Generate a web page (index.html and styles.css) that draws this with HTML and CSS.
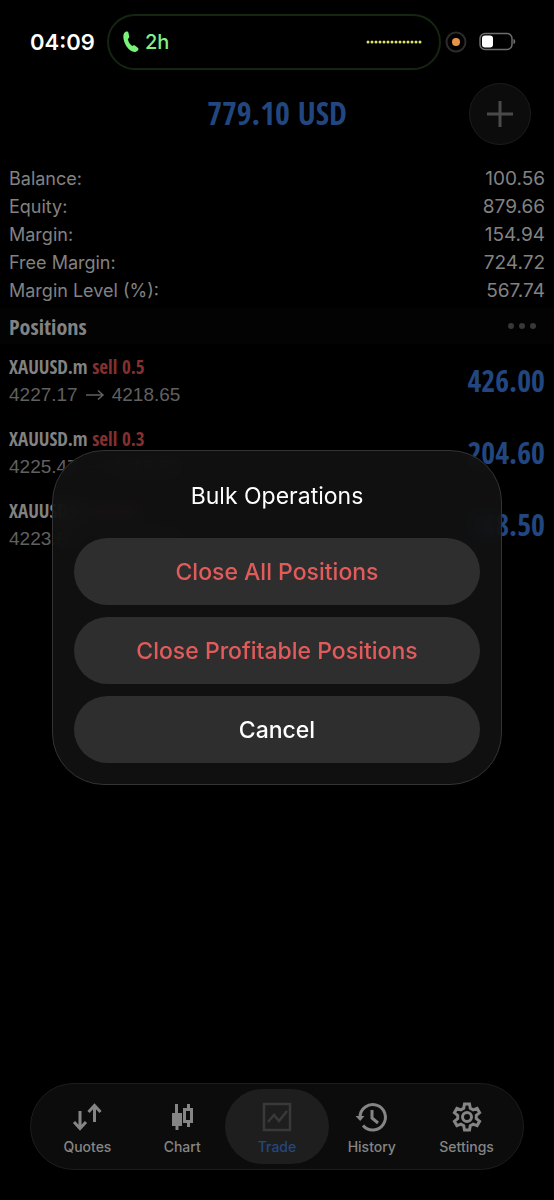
FILE: index.html
```html
<!DOCTYPE html>
<html lang="en">
<head>
<meta charset="utf-8">
<meta name="viewport" content="width=device-width, initial-scale=1">
<title>Trade</title>
<link rel="stylesheet" href="styles.css">
</head>
<body>
<div class="app">
  <div class="status">
    <time class="status-time">04:09</time>
    <div class="island">
      <svg class="phone" viewBox="0 0 18 24" width="18" height="24" aria-hidden="true"><path d="M2 3.400C3.500 1.200 6 1 6.500 3l.7 3.500c.2 1.300-.5 1.700-1.400 2.400.6 3 2 5.200 4.300 7 1-.6 1.800-1 2.800-.3l2.900 2.200c1.500 1.300.2 3.200-1.800 3.900-3.200 1-6.600-1.300-9-4.700C2.300 13.300.2 6.500 2 3.400z"/></svg>
      <span class="call-time">2h</span>
      <svg class="wave" viewBox="0 0 56 4" width="56" height="4" aria-hidden="true"><path d="M2 2H55"/></svg>
    </div>
    <svg class="recording" viewBox="0 0 22 22" width="22" height="22" aria-hidden="true"><circle class="ring" cx="11" cy="11" r="9.500"/><circle class="dot" cx="11" cy="11" r="4"/></svg>
    <svg class="battery" viewBox="0 0 38 20" width="38" height="20" aria-hidden="true"><rect class="shell" x="1" y="1.500" width="32" height="16" rx="5"/><rect class="level" x="3" y="3.500" width="11" height="12" rx="3"/><path class="tip" d="M35 7.500v4q1.500-2 0-4z"/></svg>
  </div>

  <header class="header">
    <h1 class="profit">779.10 USD</h1>
    <button class="add" type="button" aria-label="New order"><svg viewBox="0 0 26 26" width="26" height="26" aria-hidden="true"><path d="M13 0v26M0 13h26"/></svg></button>
  </header>

  <main>
    <dl class="account">
      <div class="account-row"><dt>Balance:</dt><dd>100.56</dd></div>
      <div class="account-row"><dt>Equity:</dt><dd>879.66</dd></div>
      <div class="account-row"><dt>Margin:</dt><dd>154.94</dd></div>
      <div class="account-row"><dt>Free Margin:</dt><dd>724.72</dd></div>
      <div class="account-row"><dt>Margin Level (%):</dt><dd>567.74</dd></div>
    </dl>
    <div class="section">
      <h2 class="section-title">Positions</h2>
      <button class="more" type="button" aria-label="Bulk operations"><svg viewBox="0 0 30 8" width="30" height="8" aria-hidden="true"><circle cx="4" cy="4" r="3"/><circle cx="15" cy="4" r="3"/><circle cx="26" cy="4" r="3"/></svg></button>
    </div>
    <ul class="positions">
      <li class="position">
        <div><p class="symbol">XAUUSD.m <span class="sell">sell 0.5</span></p><p class="prices">4227.17 <svg class="arrow" viewBox="0 0 20 12" width="20" height="12" role="img" aria-label="to"><path d="M1 6h17M13 1.500L18 6l-5 4.500"/></svg> 4218.65</p></div>
        <span class="value">426.00</span>
      </li>
      <li class="position">
        <div><p class="symbol">XAUUSD.m <span class="sell">sell 0.3</span></p><p class="prices">4225.47 <svg class="arrow" viewBox="0 0 20 12" width="20" height="12" role="img" aria-label="to"><path d="M1 6h17M13 1.500L18 6l-5 4.500"/></svg> 4218.65</p></div>
        <span class="value">204.60</span>
      </li>
      <li class="position">
        <div><p class="symbol">XAUUSD.m <span class="sell">sell 0.3</span></p><p class="prices">4223.60 <svg class="arrow" viewBox="0 0 20 12" width="20" height="12" role="img" aria-label="to"><path d="M1 6h17M13 1.500L18 6l-5 4.500"/></svg> 4218.65</p></div>
        <span class="value">148.50</span>
      </li>
    </ul>
  </main>

  <nav class="tabs" aria-label="Main">
    <a class="tab" href="#quotes"><svg viewBox="0 0 32 32" width="32" height="32" aria-hidden="true"><path class="line" d="M9 10v17M3 21l6 6.500 6-6.500M23.500 21V5M17.500 11l6-6.500 6 6.500"/></svg>Quotes</a>
    <a class="tab" href="#chart"><svg viewBox="0 0 32 32" width="32" height="32" aria-hidden="true"><path class="fill" d="M9 3h3v9h4v13h-3.500v4h-3v-4H6V12h3z"/><path class="fill" fill-rule="evenodd" d="M21 3h3v4h3v15h-3v4h-3v-4h-4V7h4zM20 10v9h4v-9z"/></svg>Chart</a>
    <a class="tab active" href="#trade" aria-current="page"><svg viewBox="0 0 32 32" width="32" height="32" aria-hidden="true"><path class="line" d="M3 3h26v26H3zM7 21l6-7 5 6 8-10"/></svg>Trade</a>
    <a class="tab" href="#history"><svg viewBox="0 0 32 32" width="32" height="32" aria-hidden="true"><path class="line" d="M4 16A12.700 12.700 0 1 1 7 24.500M16 9v8l6 5"/><path class="fill" d="M-.5 15h9l-4.300 5z"/></svg>History</a>
    <a class="tab" href="#settings"><svg viewBox="0 0 32 32" width="32" height="32" aria-hidden="true"><path class="line" d="M13.500 3h5l.8 4.200 2.800 1.600 4-1.400 2.500 4.300-3.300 2.700v3.200l3.300 2.700-2.500 4.300-4-1.400-2.800 1.600-.8 4.200h-5l-.8-4.200-2.800-1.600-4 1.400-2.500-4.300 3.300-2.700v-3.200l-3.300-2.700 2.500-4.300 4 1.400 2.800-1.600z"/><circle class="line" cx="16" cy="16" r="4.500"/></svg>Settings</a>
  </nav>
</div>

<div class="overlay">
  <section class="dialog" role="dialog" aria-modal="true" aria-labelledby="dialog-title">
    <h2 class="dialog-title" id="dialog-title">Bulk Operations</h2>
    <button class="action danger" type="button">Close All Positions</button>
    <button class="action danger" type="button">Close Profitable Positions</button>
    <button class="action" type="button">Cancel</button>
  </section>
</div>
</body>
</html>
```
FILE: styles.css
```css
* { box-sizing: border-box; }

body {
  margin: 0;
  background: #000;
  color: #828282;
  font-family: Inter, "Liberation Sans", sans-serif;
}

h1, h2, p, ul, dl, dd { margin: 0; padding: 0; }
button { border: 0; padding: 0; font: inherit; }
svg { display: block; flex: none; overflow: visible; }

.app {
  display: flex;
  flex-direction: column;
  min-height: 100vh;
  padding: 14px 0 30px;
}

.status {
  display: flex;
  align-items: center;
  padding: 0 37px 0 30px;
}
.status-time {
  width: 77px;
  color: #fff;
  font-size: 22px;
  font-weight: 600;
}
.island {
  flex: 1;
  display: flex;
  align-items: center;
  gap: 5px;
  height: 56px;
  padding: 0 17px 0 13px;
  border: 2px solid #14260f;
  border-radius: 28px;
}
.phone { fill: #78f278; }
.call-time { color: #83f083; font-size: 20px; font-weight: 500; }
.wave {
  margin-left: auto;
  fill: none;
  stroke: #dbe36a;
  stroke-width: 3;
  stroke-linecap: round;
  stroke-dasharray: 0 4;
}
.recording { margin: 0 12px 0 4px; }
.ring { fill: none; stroke: #2c2c2c; stroke-width: 2; }
.dot { fill: #e8954a; }
.shell { fill: none; stroke: #6c6c6c; stroke-width: 1.5; }
.level { fill: #fff; }
.tip { fill: #777; stroke: #777; }

.header {
  display: grid;
  grid-template-columns: 1fr auto 1fr;
  align-items: center;
  padding: 13px 23px 0;
}
.profit {
  grid-column: 2;
  padding-bottom: 2px;
  color: #22467f;
  font-family: "Liberation Sans Narrow", "Open Sans Condensed", Roboto, sans-serif;
  font-size: 32px;
  line-height: 36px;
}
.add {
  justify-self: end;
  display: grid;
  place-items: center;
  width: 62px;
  height: 62px;
  border: 1px solid #1c1c1c;
  border-radius: 50%;
  background: #0c0c0c;
}
.add svg { fill: none; stroke: #4a4a4a; stroke-width: 3; }

.account { padding: 20px 9px 3px; font-size: 18px; line-height: 28px; }
.account-row { display: flex; justify-content: space-between; }
.account-row dd { font-size: 19px; }

.section {
  display: flex;
  align-items: center;
  justify-content: space-between;
  height: 36px;
  padding: 0 17px 0 9px;
  background: #030303;
}
.section-title {
  font-family: "Liberation Sans Narrow", "Open Sans Condensed", Roboto, sans-serif;
  font-size: 22px;
}
.more { background: none; }
.more svg { fill: #383838; }

.positions { padding-top: 1px; list-style: none; }
.position {
  display: flex;
  align-items: center;
  justify-content: space-between;
  height: 72px;
  padding: 0 9px;
}
.symbol {
  font-family: "Liberation Sans Narrow", "Open Sans Condensed", Roboto, sans-serif;
  font-size: 19px;
  font-weight: 700;
  line-height: 28px;
}
.sell { color: #85302f; }
.prices {
  display: flex;
  align-items: center;
  gap: 7px;
  color: #606060;
  font-family: "Liberation Sans", sans-serif;
  font-size: 19px;
  line-height: 28px;
}
.arrow { fill: none; stroke: #606060; stroke-width: 1.5; }
.value {
  color: #22467f;
  font-family: "Liberation Sans Narrow", "Open Sans Condensed", Roboto, sans-serif;
  font-size: 30px;
  font-weight: 700;
  line-height: 36px;
}

.tabs {
  display: grid;
  grid-template-columns: repeat(5, 1fr);
  margin: auto 30px 0;
  padding: 5px 9px;
  border: 1px solid #1d1d1d;
  border-radius: 44px;
  background: #0c0c0c;
}
.tab {
  display: flex;
  flex-direction: column;
  align-items: center;
  gap: 5px;
  margin: 0 -5px;
  padding: 12px 0 8px;
  border-radius: 38px;
  color: #858585;
  font-size: 14px;
  font-weight: 500;
  line-height: 18px;
  text-decoration: none;
}
.tab.active { background: #1e1e1e; color: #24477f; }
.line { fill: none; stroke: #858585; stroke-width: 3; }
.fill { fill: #858585; }
.active .line { stroke: #393939; stroke-width: 2.5; }

.overlay {
  position: fixed;
  inset: 0;
  display: grid;
  align-items: center;
  padding: 87px 52px 52px;
}
.dialog {
  display: flex;
  flex-direction: column;
  gap: 12px;
  padding: 21px;
  border: 1px solid #333;
  border-radius: 52px;
  background: rgba(18, 18, 18, 0.88);
  backdrop-filter: blur(10px);
}
.dialog-title {
  padding: 8px 0 14px;
  color: #fff;
  font-size: 23px;
  font-weight: 400;
  line-height: 32px;
  text-align: center;
}
.action {
  height: 67px;
  padding-top: 1px;
  border-radius: 34px;
  background: #2e2e2f;
  color: #fff;
  font-size: 23px;
  font-weight: 500;
}
.danger { color: #e15b5b; }
```
